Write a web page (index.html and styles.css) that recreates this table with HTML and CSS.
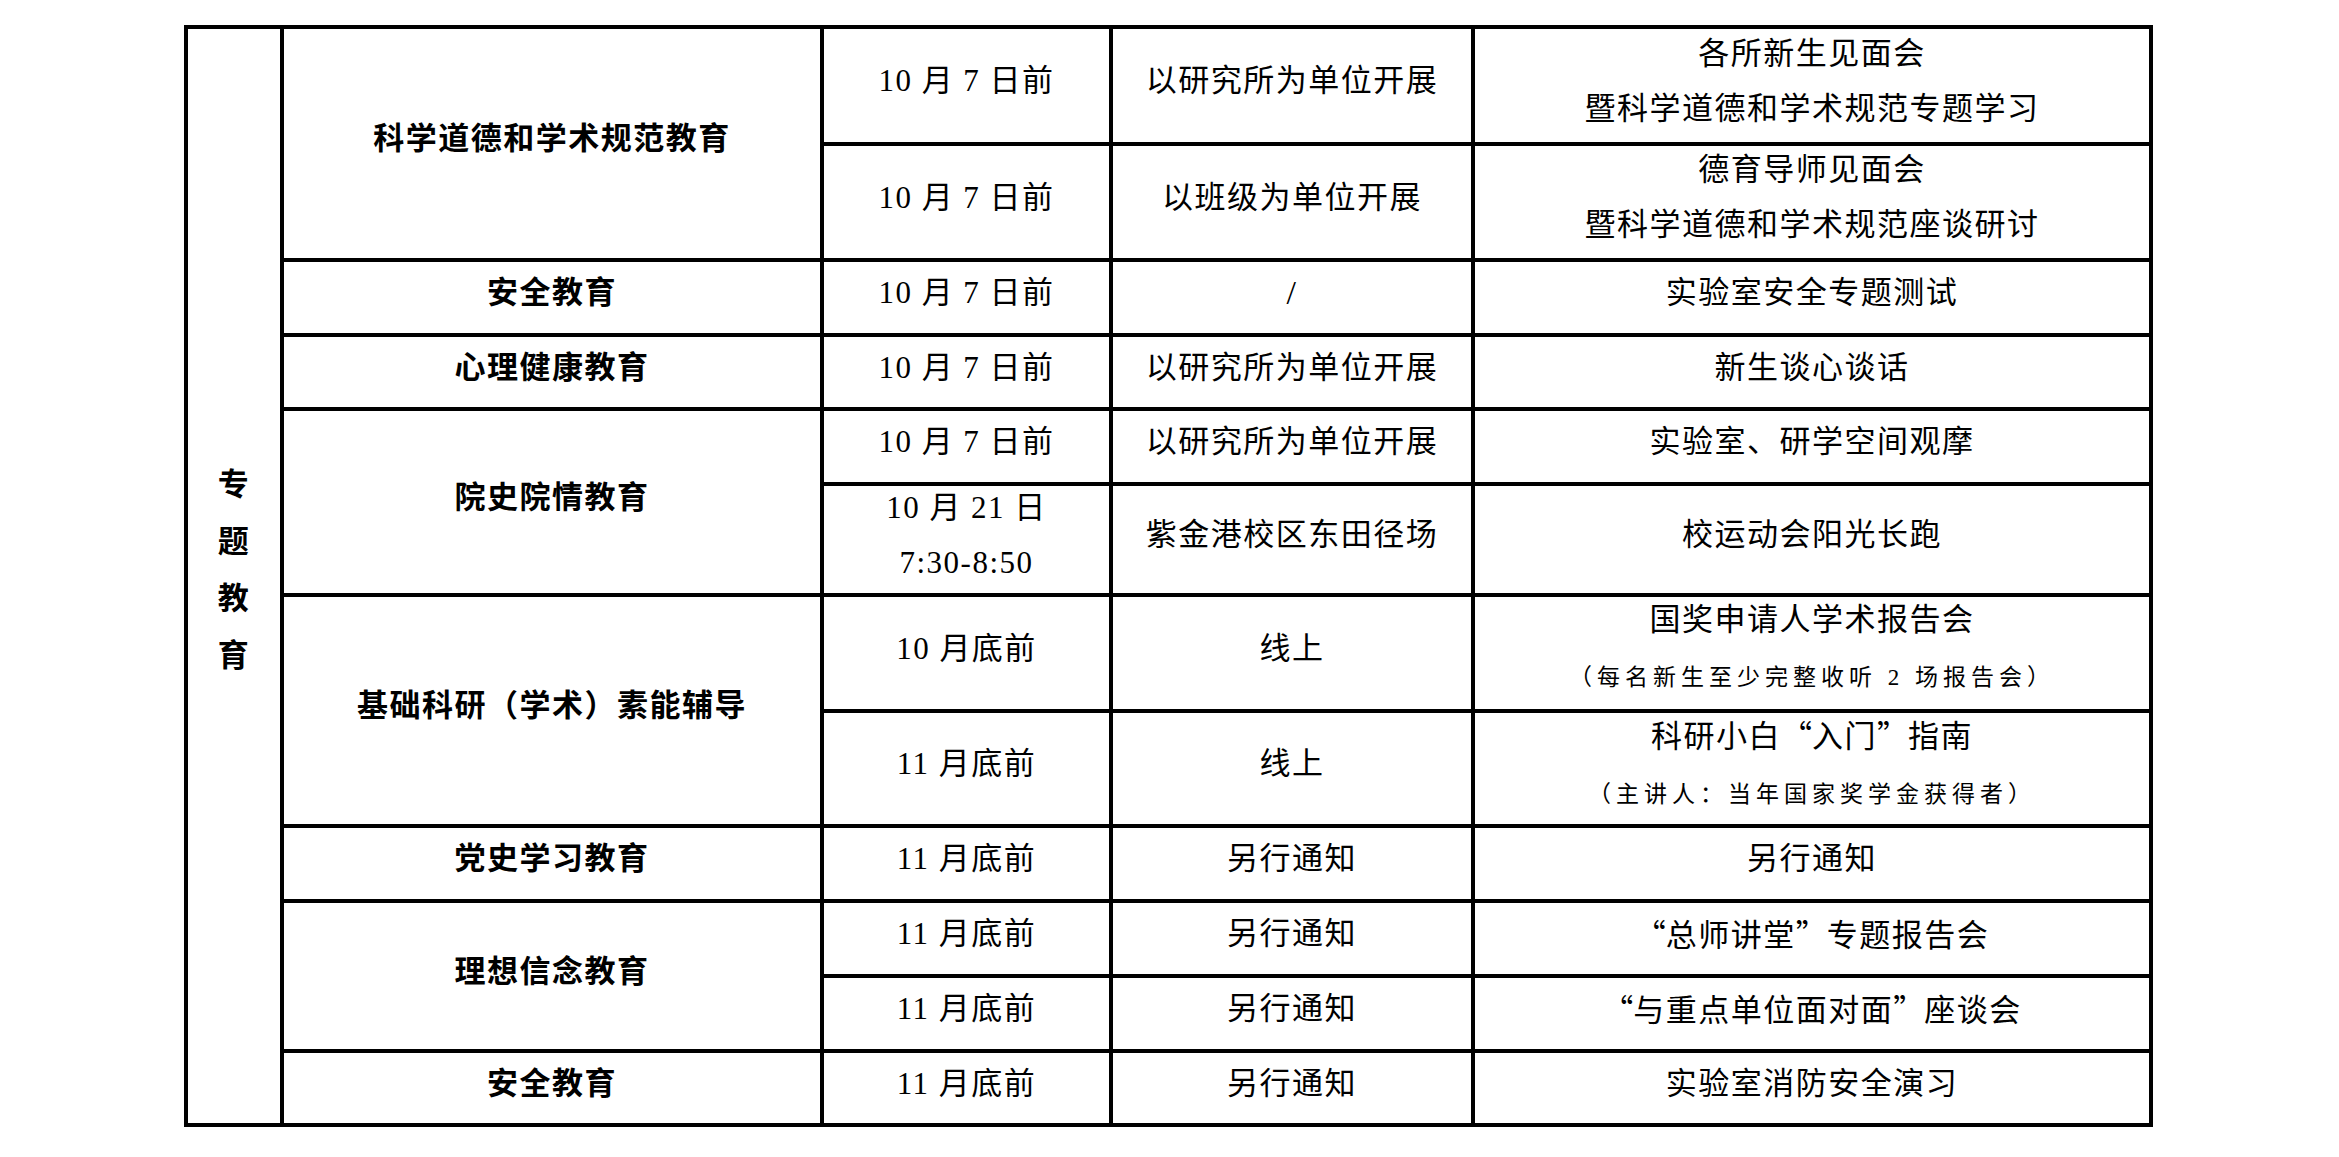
FILE: index.html
```html
<!DOCTYPE html>
<html lang="zh-CN">
<head>
<meta charset="utf-8">
<title>专题教育安排</title>
<link rel="stylesheet" href="styles.css">
</head>
<body>
<main class="page">
  <div class="sheet">
    <div class="cell side"><div class="txt">专<br>题<br>教<br>育</div></div>

    <div class="cell cat span2"><div class="txt">科学道德和学术规范教育</div></div>
    <div class="cell"><div class="txt">10 月 7 日前</div></div>
    <div class="cell"><div class="txt">以研究所为单位开展</div></div>
    <div class="cell"><div class="txt">各所新生见面会<br>暨科学道德和学术规范专题学习</div></div>
    <div class="cell"><div class="txt">10 月 7 日前</div></div>
    <div class="cell"><div class="txt">以班级为单位开展</div></div>
    <div class="cell"><div class="txt">德育导师见面会<br>暨科学道德和学术规范座谈研讨</div></div>

    <div class="cell cat"><div class="txt">安全教育</div></div>
    <div class="cell"><div class="txt">10 月 7 日前</div></div>
    <div class="cell"><div class="txt slash">/</div></div>
    <div class="cell"><div class="txt">实验室安全专题测试</div></div>

    <div class="cell cat"><div class="txt">心理健康教育</div></div>
    <div class="cell"><div class="txt">10 月 7 日前</div></div>
    <div class="cell"><div class="txt">以研究所为单位开展</div></div>
    <div class="cell"><div class="txt">新生谈心谈话</div></div>

    <div class="cell cat span2"><div class="txt">院史院情教育</div></div>
    <div class="cell"><div class="txt">10 月 7 日前</div></div>
    <div class="cell"><div class="txt">以研究所为单位开展</div></div>
    <div class="cell"><div class="txt">实验室、研学空间观摩</div></div>
    <div class="cell"><div class="txt">10 月 21 日<br>7:30-8:50</div></div>
    <div class="cell"><div class="txt">紫金港校区东田径场</div></div>
    <div class="cell"><div class="txt">校运动会阳光长跑</div></div>

    <div class="cell cat span2"><div class="txt">基础科研（学术）素能辅导</div></div>
    <div class="cell"><div class="txt">10 月底前</div></div>
    <div class="cell"><div class="txt">线上</div></div>
    <div class="cell"><div class="txt">国奖申请人学术报告会<br><span class="small">（每名新生至少完整收听 2 场报告会）</span></div></div>
    <div class="cell"><div class="txt">11 月底前</div></div>
    <div class="cell"><div class="txt">线上</div></div>
    <div class="cell"><div class="txt">科研小白<span class="q">“</span>入门<span class="q">”</span>指南<br><span class="small">（主讲人：当年国家奖学金获得者）</span></div></div>

    <div class="cell cat"><div class="txt">党史学习教育</div></div>
    <div class="cell"><div class="txt">11 月底前</div></div>
    <div class="cell"><div class="txt">另行通知</div></div>
    <div class="cell"><div class="txt">另行通知</div></div>

    <div class="cell cat span2"><div class="txt">理想信念教育</div></div>
    <div class="cell"><div class="txt">11 月底前</div></div>
    <div class="cell"><div class="txt">另行通知</div></div>
    <div class="cell"><div class="txt"><span class="q">“</span>总师讲堂<span class="q">”</span>专题报告会</div></div>
    <div class="cell"><div class="txt">11 月底前</div></div>
    <div class="cell"><div class="txt">另行通知</div></div>
    <div class="cell"><div class="txt"><span class="q">“</span>与重点单位面对面<span class="q">”</span>座谈会</div></div>

    <div class="cell cat"><div class="txt">安全教育</div></div>
    <div class="cell"><div class="txt">11 月底前</div></div>
    <div class="cell"><div class="txt">另行通知</div></div>
    <div class="cell"><div class="txt">实验室消防安全演习</div></div>
  </div>
</main>
</body>
</html>
```

FILE: styles.css
```css
html, body {
  margin: 0;
  padding: 0;
  background: #ffffff;
}

body {
  font-family: "Liberation Serif", "Noto Sans CJK SC", serif;
  color: #000000;
}

.page {
  padding: 25px 0 0 184px;
}

.sheet {
  display: inline-grid;
  grid-template-columns: 92px 536px 285px 358px 674px;
  grid-template-rows: 113px 112px 71px 70px 71px 107px 112px 111px 71px 71px 71px 70px;
  gap: 4px;
  padding: 4px;
  background: #000000;
}

.cell {
  background: #ffffff;
  display: flex;
  align-items: center;
  justify-content: center;
  text-align: center;
  box-sizing: border-box;
  padding-bottom: 10px;
  font-size: 31px;
  letter-spacing: 1.5px;
  line-height: 55px;
  font-weight: 400;
}

.txt {
  white-space: nowrap;
}

.span2 {
  grid-row: span 2;
}

.side {
  grid-row: span 12;
  font-weight: 700;
  line-height: 57px;
  padding-bottom: 12px;
}

.cat {
  font-weight: 700;
}

.small {
  font-size: 23px;
  letter-spacing: 5px;
}

.q {
  font-family: "Noto Sans CJK SC", sans-serif;
  letter-spacing: 0;
}

.slash {
  font-size: 34px;
}
```
